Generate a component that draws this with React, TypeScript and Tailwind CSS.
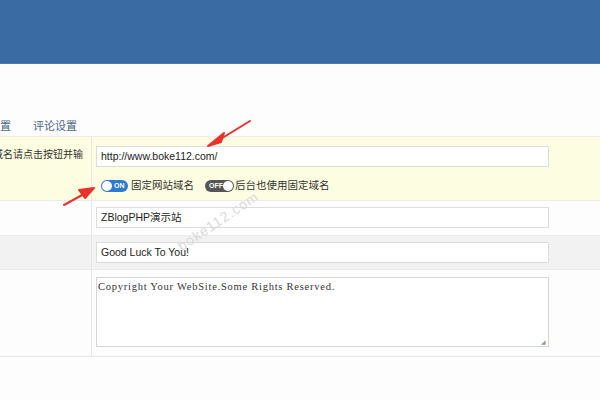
import React from "react";

function Toggle({ on }: { on: boolean }) {
  return on ? (
    <span className="flex h-[12px] w-[27px] items-center rounded-full bg-[#2c7bd0] pl-[1px]">
      <span className="h-[10px] w-[10px] rounded-full bg-white" />
      <span className="ml-[2px] text-[7px] font-bold leading-none text-white">ON</span>
    </span>
  ) : (
    <span className="flex h-[12px] w-[29px] items-center justify-between rounded-full bg-[#555] pl-[4px] pr-[1px]">
      <span className="text-[7px] font-bold leading-none text-white">OFF</span>
      <span className="h-[10px] w-[10px] rounded-full bg-white" />
    </span>
  );
}

function Field({ value }: { value: string }) {
  return (
    <div className="flex h-[21px] w-[453px] items-center border border-[#dcdcdc] bg-white px-[4px] text-[10.5px] text-[#222]">
      {value}
    </div>
  );
}

export default function App() {
  return (
    <div
      className="relative h-[400px] w-[600px] overflow-hidden bg-[#fdfdfd]"
      style={{ fontFamily: '"Liberation Sans", "Noto Sans CJK SC", sans-serif' }}
    >
      {/* 顶部 */}
      <div className="h-[64px] border-b border-[#4a78ab] bg-[#3a6ca3]" />

      {/* 标签 */}
      <div className="mt-[57px] flex gap-[22px] text-[11px] leading-none text-[#4a6788]">
        <span className="-ml-[11px]">设置</span>
        <span>评论设置</span>
      </div>

      {/* 表格 */}
      <div className="mt-[4px] border-t border-[#ececec]">
        <div className="flex h-[64px] border-b border-[#ebebeb] bg-[#fdfde1]">
          <div className="flex w-[92px] shrink-0 justify-end overflow-hidden whitespace-nowrap border-r border-[#e6e6e6] pr-[8px] pt-[10px] text-[10px] text-[#333]">
            如需固定域名请点击按钮并输
          </div>
          <div className="pl-[4px] pt-[9px]">
            <Field value="http://www.boke112.com/" />
            <div className="mt-[11px] flex items-center pl-[5px] text-[10.5px] text-[#333]">
              <Toggle on />
              <span className="ml-[3px]">固定网站域名</span>
              <span className="ml-[11px]">
                <Toggle on={false} />
              </span>
              <span className="ml-[1px]">后台也使用固定域名</span>
            </div>
          </div>
        </div>

        <div className="flex h-[35px] border-b border-[#ebebeb] bg-[#fdfdfd]">
          <div className="w-[92px] shrink-0 border-r border-[#e6e6e6]" />
          <div className="pl-[4px] pt-[6px]">
            <Field value="ZBlogPHP演示站" />
          </div>
        </div>

        <div className="flex h-[34px] border-b border-[#ebebeb] bg-[#f2f2f2]">
          <div className="w-[92px] shrink-0 border-r border-[#e6e6e6]" />
          <div className="pl-[4px] pt-[6px]">
            <Field value="Good Luck To You!" />
          </div>
        </div>

        <div className="flex h-[87px] border-b border-[#e6e6e6] bg-[#fdfdfd]">
          <div className="w-[92px] shrink-0 border-r border-[#e6e6e6]" />
          <div className="pl-[4px] pt-[7px]">
            <div
              className="relative h-[70px] w-[453px] border border-[#d6d6d6] bg-white px-[1px] pt-[1px] text-[10.5px] tracking-[0.75px] text-[#333]"
              style={{ fontFamily: '"Liberation Serif", serif' }}
            >
              Copyright Your WebSite.Some Rights Reserved.
              <span className="absolute bottom-[1px] right-[1px] text-[6px] leading-none text-[#999]">◢</span>
            </div>
          </div>
        </div>
      </div>

      {/* 水印 */}
      <div className="absolute left-[171px] top-[213px] -rotate-[34deg] text-[14px] leading-[16px] tracking-[1px] text-[#dadada]">
        boke112.com
      </div>

      {/* 红色箭头 */}
      <svg className="absolute left-0 top-0" width="600" height="400">
        <path d="M250 121 L219 140" stroke="#e8322d" strokeWidth="2" strokeLinecap="round" />
        <path d="M208 146 L224 133 L221 142 Z" fill="#e8322d" stroke="#e8322d" strokeWidth="2" strokeLinejoin="round" />
        <path d="M64 205 L84 194" stroke="#e8322d" strokeWidth="2" strokeLinecap="round" />
        <path d="M94 188 L79 190 L85 198 Z" fill="#e8322d" stroke="#e8322d" strokeWidth="2" strokeLinejoin="round" />
      </svg>
    </div>
  );
}
